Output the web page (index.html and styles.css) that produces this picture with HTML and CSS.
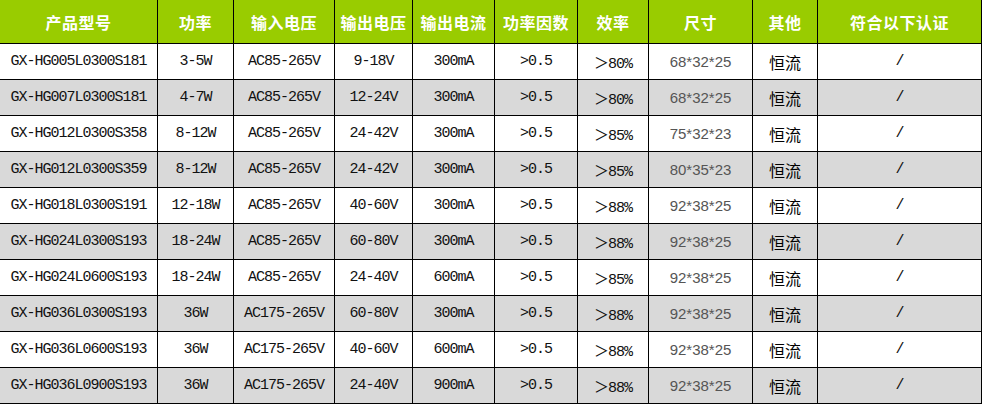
FILE: index.html
```html
<!DOCTYPE html>
<html lang="zh-CN">
<head>
<meta charset="utf-8">
<title>产品参数</title>
<link rel="stylesheet" href="styles.css">
</head>
<body>
<div class="spec-table">
  <div class="row head">
    <div class="cell">产品型号</div><div class="cell">功率</div><div class="cell">输入电压</div><div class="cell">输出电压</div><div class="cell">输出电流</div><div class="cell">功率因数</div><div class="cell">效率</div><div class="cell">尺寸</div><div class="cell">其他</div><div class="cell">符合以下认证</div>
  </div>
  <div class="row odd">
    <div class="cell">GX-HG005L0300S181</div><div class="cell">3-5W</div><div class="cell">AC85-265V</div><div class="cell">9-18V</div><div class="cell">300mA</div><div class="cell">&gt;0.5</div><div class="cell">＞80%</div><div class="cell size">68*32*25</div><div class="cell cjk">恒流</div><div class="cell">/</div>
  </div>
  <div class="row even">
    <div class="cell">GX-HG007L0300S181</div><div class="cell">4-7W</div><div class="cell">AC85-265V</div><div class="cell">12-24V</div><div class="cell">300mA</div><div class="cell">&gt;0.5</div><div class="cell">＞80%</div><div class="cell size">68*32*25</div><div class="cell cjk">恒流</div><div class="cell">/</div>
  </div>
  <div class="row odd">
    <div class="cell">GX-HG012L0300S358</div><div class="cell">8-12W</div><div class="cell">AC85-265V</div><div class="cell">24-42V</div><div class="cell">300mA</div><div class="cell">&gt;0.5</div><div class="cell">＞85%</div><div class="cell size">75*32*23</div><div class="cell cjk">恒流</div><div class="cell">/</div>
  </div>
  <div class="row even">
    <div class="cell">GX-HG012L0300S359</div><div class="cell">8-12W</div><div class="cell">AC85-265V</div><div class="cell">24-42V</div><div class="cell">300mA</div><div class="cell">&gt;0.5</div><div class="cell">＞85%</div><div class="cell size">80*35*23</div><div class="cell cjk">恒流</div><div class="cell">/</div>
  </div>
  <div class="row odd">
    <div class="cell">GX-HG018L0300S191</div><div class="cell">12-18W</div><div class="cell">AC85-265V</div><div class="cell">40-60V</div><div class="cell">300mA</div><div class="cell">&gt;0.5</div><div class="cell">＞88%</div><div class="cell size">92*38*25</div><div class="cell cjk">恒流</div><div class="cell">/</div>
  </div>
  <div class="row even">
    <div class="cell">GX-HG024L0300S193</div><div class="cell">18-24W</div><div class="cell">AC85-265V</div><div class="cell">60-80V</div><div class="cell">300mA</div><div class="cell">&gt;0.5</div><div class="cell">＞88%</div><div class="cell size">92*38*25</div><div class="cell cjk">恒流</div><div class="cell">/</div>
  </div>
  <div class="row odd">
    <div class="cell">GX-HG024L0600S193</div><div class="cell">18-24W</div><div class="cell">AC85-265V</div><div class="cell">24-40V</div><div class="cell">600mA</div><div class="cell">&gt;0.5</div><div class="cell">＞85%</div><div class="cell size">92*38*25</div><div class="cell cjk">恒流</div><div class="cell">/</div>
  </div>
  <div class="row even">
    <div class="cell">GX-HG036L0300S193</div><div class="cell">36W</div><div class="cell">AC175-265V</div><div class="cell">60-80V</div><div class="cell">300mA</div><div class="cell">&gt;0.5</div><div class="cell">＞88%</div><div class="cell size">92*38*25</div><div class="cell cjk">恒流</div><div class="cell">/</div>
  </div>
  <div class="row odd">
    <div class="cell">GX-HG036L0600S193</div><div class="cell">36W</div><div class="cell">AC175-265V</div><div class="cell">40-60V</div><div class="cell">600mA</div><div class="cell">&gt;0.5</div><div class="cell">＞88%</div><div class="cell size">92*38*25</div><div class="cell cjk">恒流</div><div class="cell">/</div>
  </div>
  <div class="row even">
    <div class="cell">GX-HG036L0900S193</div><div class="cell">36W</div><div class="cell">AC175-265V</div><div class="cell">24-40V</div><div class="cell">900mA</div><div class="cell">&gt;0.5</div><div class="cell">＞88%</div><div class="cell size">92*38*25</div><div class="cell cjk">恒流</div><div class="cell">/</div>
  </div>
</div>
</body>
</html>
```

FILE: styles.css
```css
html, body {
  margin: 0;
  padding: 0;
  background: #ffffff;
}

.spec-table {
  width: 982px;
  box-sizing: border-box;
  display: grid;
  grid-template-columns: 157px 75px 100px 77px 81px 82px 70px 103px 64px 163px;
  grid-template-rows: 43px repeat(10, 35px);
  gap: 1px;
  padding: 0 1px 1px 0;
  background: #000000;
}

.row {
  display: contents;
}

.cell {
  display: flex;
  align-items: center;
  justify-content: center;
  white-space: nowrap;
  overflow: hidden;
  font-family: "Liberation Mono", "Noto Sans CJK SC", monospace;
  font-size: 15px;
  letter-spacing: -1px;
  color: #111111;
}

.head .cell {
  background: #99cc00;
  color: #ffffff;
  font-family: "Noto Sans CJK SC", sans-serif;
  font-weight: 700;
  font-size: 16px;
  letter-spacing: 0.5px;
}

.odd .cell {
  background: #ffffff;
}

.even .cell {
  background: #d9d9d9;
}

.cell.size {
  font-family: "Liberation Sans", sans-serif;
  font-size: 15px;
  letter-spacing: 0;
  color: #555555;
}

.cell.cjk {
  font-family: "Noto Sans CJK SC", sans-serif;
  font-size: 16px;
  letter-spacing: 0;
  color: #000000;
}
```
